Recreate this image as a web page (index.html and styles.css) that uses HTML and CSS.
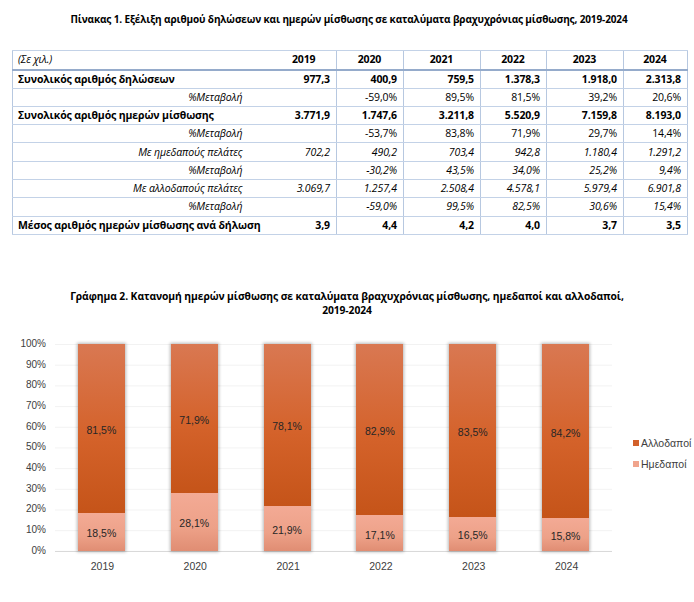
FILE: index.html
```html
<!DOCTYPE html>
<html lang="el">
<head>
<meta charset="utf-8">
<link rel="stylesheet" href="styles.css">
</head>
<body>
<div class="page">
  <h1 class="title">Πίνακας 1. Εξέλιξη αριθμού δηλώσεων και ημερών μίσθωσης σε καταλύματα βραχυχρόνιας μίσθωσης, 2019-2024</h1>

  <table class="data">
    <colgroup>
      <col class="c-label"><col class="c-2019"><col class="c-2020"><col class="c-2021"><col class="c-2022"><col class="c-2023"><col class="c-2024">
    </colgroup>
    <thead>
      <tr><th class="unit">(Σε χιλ.)</th><th class="yr first">2019</th><th class="yr">2020</th><th class="yr">2021</th><th class="yr">2022</th><th class="yr">2023</th><th class="yr">2024</th></tr>
    </thead>
    <tbody>
      <tr class="bold"><td class="lbl">Συνολικός αριθμός δηλώσεων</td><td class="first">977,3</td><td>400,9</td><td>759,5</td><td>1.378,3</td><td>1.918,0</td><td>2.313,8</td></tr>
      <tr class="pct"><td class="lbl sub">%Μεταβολή</td><td class="first"></td><td>-59,0%</td><td>89,5%</td><td>81,5%</td><td>39,2%</td><td>20,6%</td></tr>
      <tr class="bold"><td class="lbl">Συνολικός αριθμός ημερών μίσθωσης</td><td class="first">3.771,9</td><td>1.747,6</td><td>3.211,8</td><td>5.520,9</td><td>7.159,8</td><td>8.193,0</td></tr>
      <tr class="pct"><td class="lbl sub">%Μεταβολή</td><td class="first"></td><td>-53,7%</td><td>83,8%</td><td>71,9%</td><td>29,7%</td><td>14,4%</td></tr>
      <tr class="ital"><td class="lbl sub">Με ημεδαπούς πελάτες</td><td class="first">702,2</td><td>490,2</td><td>703,4</td><td>942,8</td><td>1.180,4</td><td>1.291,2</td></tr>
      <tr class="ital"><td class="lbl sub">%Μεταβολή</td><td class="first"></td><td>-30,2%</td><td>43,5%</td><td>34,0%</td><td>25,2%</td><td>9,4%</td></tr>
      <tr class="ital"><td class="lbl sub">Με αλλοδαπούς πελάτες</td><td class="first">3.069,7</td><td>1.257,4</td><td>2.508,4</td><td>4.578,1</td><td>5.979,4</td><td>6.901,8</td></tr>
      <tr class="ital"><td class="lbl sub">%Μεταβολή</td><td class="first"></td><td>-59,0%</td><td>99,5%</td><td>82,5%</td><td>30,6%</td><td>15,4%</td></tr>
      <tr class="bold"><td class="lbl">Μέσος αριθμός ημερών μίσθωσης ανά δήλωση</td><td class="first">3,9</td><td>4,4</td><td>4,2</td><td>4,0</td><td>3,7</td><td>3,5</td></tr>
    </tbody>
  </table>

  <h2 class="chart-title">Γράφημα 2. Κατανομή ημερών μίσθωσης σε καταλύματα βραχυχρόνιας μίσθωσης, ημεδαποί και αλλοδαποί,<br>2019-2024</h2>

  <div class="chart">
    <div class="yaxis">
      <span>100%</span><span>90%</span><span>80%</span><span>70%</span><span>60%</span><span>50%</span><span>40%</span><span>30%</span><span>20%</span><span>10%</span><span>0%</span>
    </div>
    <div class="plot-wrap">
      <div class="plot">
        <div class="cat"><div class="bar"><div class="seg foreign" style="flex-basis:81.5%">81,5%</div><div class="seg domestic" style="flex-basis:18.5%">18,5%</div></div></div>
        <div class="cat"><div class="bar"><div class="seg foreign" style="flex-basis:71.9%">71,9%</div><div class="seg domestic" style="flex-basis:28.1%">28,1%</div></div></div>
        <div class="cat"><div class="bar"><div class="seg foreign" style="flex-basis:78.1%">78,1%</div><div class="seg domestic" style="flex-basis:21.9%">21,9%</div></div></div>
        <div class="cat"><div class="bar"><div class="seg foreign" style="flex-basis:82.9%">82,9%</div><div class="seg domestic" style="flex-basis:17.1%">17,1%</div></div></div>
        <div class="cat"><div class="bar"><div class="seg foreign" style="flex-basis:83.5%">83,5%</div><div class="seg domestic" style="flex-basis:16.5%">16,5%</div></div></div>
        <div class="cat"><div class="bar"><div class="seg foreign" style="flex-basis:84.2%">84,2%</div><div class="seg domestic" style="flex-basis:15.8%">15,8%</div></div></div>
      </div>
      <div class="xaxis">
        <span>2019</span><span>2020</span><span>2021</span><span>2022</span><span>2023</span><span>2024</span>
      </div>
    </div>
    <ul class="legend">
      <li><i class="sw sw-foreign"></i>Αλλοδαποί</li>
      <li><i class="sw sw-domestic"></i>Ημεδαποί</li>
    </ul>
  </div>
</div>
</body>
</html>
```

FILE: styles.css
```css
* { box-sizing: border-box; }
html, body { margin: 0; padding: 0; background: #fff; }
body { width: 694px; height: 602px; overflow: hidden; }

.page {
  font-family: "Open Sans", "Noto Sans", sans-serif;
  color: #000;
}

.title {
  margin: 0;
  padding-top: 11px;
  height: 50px;
  font-size: 10px;
  line-height: 16px;
  font-weight: 700;
  text-align: center;
  letter-spacing: -0.12px;
  padding-left: 4px;
}

.data {
  margin-left: 12px;
  width: 675px;
  border-collapse: collapse;
  table-layout: fixed;
  font-size: 10.5px;
  letter-spacing: -0.12px;
  border: 1px solid #b7c8e0;
}
.c-label { width: 260px; }
.c-2019 { width: 64px; }
.c-2020 { width: 67px; }
.c-2021 { width: 77px; }
.c-2022 { width: 66px; }
.c-2023 { width: 77px; }
.c-2024 { width: 64px; }

.data th, .data td {
  padding: 0 6px 0 5px;
  height: 18px;
  line-height: 17px;
  white-space: nowrap;
  border-top: 1px solid #c3d2e7;
  border-bottom: 1px solid #c3d2e7;
  border-left: 1px solid #b7c8e0;
  text-align: right;
}
.data tbody tr td { height: 18.3px; }
.data thead th {
  border-bottom: 2px solid #95abcb;
  height: 19px;
}
.data th.unit {
  text-align: left;
  font-weight: 400;
  font-style: italic;
}
.data th.yr { text-align: center; font-weight: 700; }
.data .first, .data .lbl { border-left: none; }
.data td.lbl { text-align: left; }
.data td.lbl.sub { text-align: right; padding-right: 30px; font-style: italic; }
.data tr.bold td { font-weight: 700; }
.data tr.ital td { font-style: italic; }

.chart-title {
  margin: 54px 0 0;
  font-size: 10.3px;
  line-height: 14px;
  font-weight: 700;
  text-align: center;
  letter-spacing: -0.08px;
  padding-left: 0;
}

.chart {
  display: flex;
  margin-top: 21px;
  font-family: "Liberation Sans", Arial, sans-serif;
  font-size: 10px;
  color: #404040;
}

.yaxis {
  width: 46px;
  height: 219px;
  display: flex;
  flex-direction: column;
  justify-content: space-between;
  align-items: flex-end;
  line-height: 12px;
  color: #404040;
}

.plot-wrap {
  margin-left: 9px;
  width: 557px;
  padding-top: 6px;
}

.plot {
  height: 208px;
  display: flex;
  border-bottom: 1px solid #d9d9d9;
  background-image: linear-gradient(#f2f2f2 1px, transparent 1px);
  background-size: 100% 10%;
}

.cat {
  flex: 1;
  display: flex;
  justify-content: center;
}

.bar {
  width: 47px;
  height: 100%;
  display: flex;
  flex-direction: column;
  box-shadow: 0 0 3px 1px rgba(0, 0, 0, 0.28);
}

.seg {
  display: flex;
  align-items: center;
  justify-content: center;
  color: #262626;
  font-size: 10.5px;
  padding-top: 3px;
}
.foreign { background: linear-gradient(#d97852, #d4622a 55%, #c55419); }
.domestic { background: linear-gradient(#f3aa95, #eda188 60%, #e08d73); }

.xaxis {
  display: flex;
  margin-top: 8px;
  line-height: 12px;
  font-size: 10.5px;
}
.xaxis span {
  flex: 1;
  text-align: center;
  padding-left: 2px;
}

.legend {
  list-style: none;
  margin: 99px 0 0 21px;
  padding: 0;
  line-height: 12px;
  font-size: 10.5px;
}
.legend li {
  display: flex;
  align-items: center;
  margin-bottom: 9px;
  white-space: nowrap;
}
.sw {
  display: inline-block;
  width: 6px;
  height: 6px;
  margin-right: 2px;
}
.sw-foreign { background: #d2602a; }
.sw-domestic { background: #f0a48c; }
```
